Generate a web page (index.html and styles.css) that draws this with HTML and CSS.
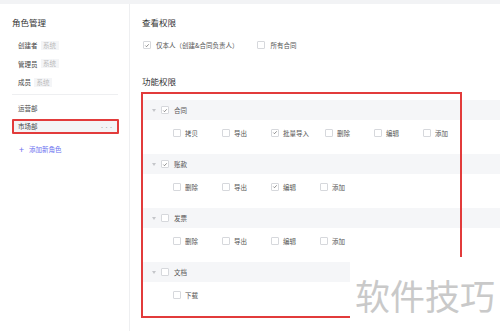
FILE: index.html
```html
<!DOCTYPE html>
<html lang="zh-CN">
<head>
  <meta charset="UTF-8" />
  <title>角色管理</title>
  <link rel="stylesheet" href="styles.css">
</head>
<body>

<div class="topbar"></div>

<div class="page">
  <!-- Left: role list -->
  <aside class="sidebar">
    <h2>角色管理</h2>
    <ul class="roles">
      <li class="role">创建者 <span class="badge">系统</span></li>
      <li class="role">管理员 <span class="badge">系统</span></li>
      <li class="role">成员 <span class="badge">系统</span></li>
    </ul>
    <div class="divider"></div>
    <ul class="roles">
      <li class="role">运营部</li>
      <li class="role active">市场部 <span class="more">···</span><span class="mark"></span></li>
    </ul>
    <div class="add-role"><span class="plus">+</span>添加新角色</div>
  </aside>

  <!-- Right: permissions -->
  <main class="main">
    <h2>查看权限</h2>
    <div class="options">
      <label class="opt"><span class="cb checked"><svg viewBox="0 0 8 8"><polyline points="1.8,4.1 3.3,5.6 6.3,2.4"/></svg></span>仅本人（创建&amp;合同负责人）</label>
      <label class="opt"><span class="cb"></span>所有合同</label>
    </div>

    <h2 class="sub">功能权限</h2>
    <div class="perms">
      <div class="group">
        <div class="group-head"><span class="caret"></span><span class="cb checked"><svg viewBox="0 0 8 8"><polyline points="1.8,4.1 3.3,5.6 6.3,2.4"/></svg></span>合同</div>
        <div class="group-items">
          <label class="item"><span class="cb"></span><span class="txt">拷贝</span></label>
          <label class="item"><span class="cb"></span><span class="txt">导出</span></label>
          <label class="item"><span class="cb checked"><svg viewBox="0 0 8 8"><polyline points="1.8,4.1 3.3,5.6 6.3,2.4"/></svg></span><span class="txt">批量导入</span></label>
          <label class="item"><span class="cb"></span><span class="txt">删除</span></label>
          <label class="item"><span class="cb"></span><span class="txt">编辑</span></label>
          <label class="item"><span class="cb"></span><span class="txt">添加</span></label>
        </div>
      </div>

      <div class="group">
        <div class="group-head"><span class="caret"></span><span class="cb checked"><svg viewBox="0 0 8 8"><polyline points="1.8,4.1 3.3,5.6 6.3,2.4"/></svg></span>账款</div>
        <div class="group-items">
          <label class="item"><span class="cb"></span><span class="txt">删除</span></label>
          <label class="item"><span class="cb"></span><span class="txt">导出</span></label>
          <label class="item"><span class="cb checked"><svg viewBox="0 0 8 8"><polyline points="1.8,4.1 3.3,5.6 6.3,2.4"/></svg></span><span class="txt">编辑</span></label>
          <label class="item"><span class="cb"></span><span class="txt">添加</span></label>
        </div>
      </div>

      <div class="group">
        <div class="group-head"><span class="caret"></span><span class="cb"></span>发票</div>
        <div class="group-items">
          <label class="item"><span class="cb"></span><span class="txt">删除</span></label>
          <label class="item"><span class="cb"></span><span class="txt">导出</span></label>
          <label class="item"><span class="cb"></span><span class="txt">编辑</span></label>
          <label class="item"><span class="cb"></span><span class="txt">添加</span></label>
        </div>
      </div>

      <div class="group">
        <div class="group-head"><span class="caret"></span><span class="cb"></span>文档</div>
        <div class="group-items">
          <label class="item"><span class="cb"></span><span class="txt">下载</span></label>
        </div>
      </div>

      <!-- annotation box -->
      <div class="perms-mark"></div>
    </div>
  </main>
</div>

<div class="watermark">软件技巧</div>

</body>
</html>
```

FILE: styles.css
```css
* {
  box-sizing: border-box;
}

body {
  margin: 0;
  width: 500px;
  height: 331px;
  overflow: hidden;
  position: relative;
  background: #fff;
  font-family: 'Noto Sans CJK SC', 'Noto Sans', sans-serif;
  font-size: 6.5px;
  color: #555;
}

ul {
  list-style: none;
  margin: 0;
  padding: 0;
}

h2 {
  margin: 0;
  font-size: 8.5px;
  line-height: 12px;
  font-weight: 400;
  color: #333;
}

.topbar {
  height: 4px;
  background: #f2f3f5;
}

.page {
  display: flex;
  height: 327px;
}

/* sidebar */
.sidebar {
  width: 130px;
  border-right: 1px solid #eeeff1;
  padding: 12px 11px 0 12px;
}

.sidebar h2 {
  margin-bottom: 10px;
}

.role {
  position: relative;
  display: flex;
  align-items: center;
  height: 14px;
  padding-left: 6px;
  margin-bottom: 4.5px;
  color: #444;
}

.badge {
  margin-left: 3px;
  padding: 0 2.5px;
  line-height: 9px;
  background: #f4f5f7;
  color: #bbb;
}

.divider {
  height: 1px;
  background: #eeeff1;
  margin: 1.5px 0 6px;
}

.role.active {
  background: #f3f4f6;
  margin-bottom: 0;
}

.more {
  margin-left: auto;
  margin-right: 5px;
  font-size: 5px;
  letter-spacing: -0.5px;
  color: #aaa;
}

.mark {
  position: absolute;
  inset: -0.5px -0.5px -0.5px 0;
  border: 2px solid #e23b3b;
  border-radius: 1px;
}

.add-role {
  display: flex;
  align-items: center;
  height: 14px;
  margin-top: 9px;
  padding-left: 7px;
  color: #6a70f0;
}

.plus {
  font-size: 9px;
  margin-right: 5px;
}

/* main */
.main {
  flex: 1;
  padding: 12px 0 0 12px;
}

.options {
  display: flex;
  align-items: center;
  gap: 19px;
  height: 14px;
  margin-top: 10px;
  padding-left: 1px;
}

.opt {
  display: flex;
  align-items: center;
}

.opt .cb {
  margin-right: 5px;
}

.sub {
  margin-top: 23px;
  margin-bottom: 13px;
}

.cb {
  display: inline-flex;
  align-items: center;
  justify-content: center;
  width: 8px;
  height: 8px;
  border: 1px solid #d6d8dc;
  border-radius: 1px;
  background: #fff;
  flex-shrink: 0;
}

.cb svg {
  width: 7px;
  height: 7px;
}

.cb polyline {
  fill: none;
  stroke: #555;
  stroke-width: 0.9;
}

.perms {
  position: relative;
}

.group {
  margin-bottom: 9px;
}

.group-head {
  display: flex;
  align-items: center;
  height: 20px;
  padding-left: 10px;
  background: #f5f6f8;
  color: #555;
}

.caret {
  width: 0;
  height: 0;
  border-left: 2px solid transparent;
  border-right: 2px solid transparent;
  border-top: 3px solid #c4c6ca;
  margin-right: 5px;
}

.group-head .cb {
  margin-right: 5px;
}

.group-items {
  display: flex;
  align-items: center;
  gap: 16px;
  height: 25px;
  padding-left: 31px;
}

.item {
  display: flex;
  align-items: center;
}

.item .cb {
  margin-right: 4px;
}

.txt {
  min-width: 21px;
}

.perms-mark {
  position: absolute;
  left: -1.5px;
  top: -8px;
  width: 321px;
  height: 226px;
  border: 2px solid #e23b3b;
}

.watermark {
  position: absolute;
  right: 0;
  bottom: 0;
  width: 150px;
  height: 74px;
  background: #fff;
  display: flex;
  align-items: center;
  justify-content: center;
  font-size: 35px;
  color: #c9c9c9;
}
```
